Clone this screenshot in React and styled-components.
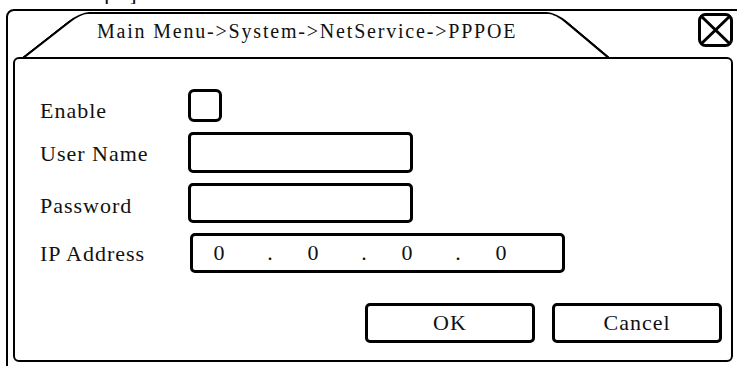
import React from "react"
import styled, { createGlobalStyle } from "styled-components"

const GlobalStyle = createGlobalStyle`
  html, body {
    margin: 0;
    padding: 0;
    background: #fff;
    overflow: hidden;
  }
  #root {
    height: 366px;
    overflow: hidden;
  }
`

const App = () => {
  return (
    <Screen>
      <GlobalStyle />
      <Caption>
        <span>Setup ]</span>
      </Caption>
      <Frame>
        <Header>
          <Tab>Main Menu-&gt;System-&gt;NetService-&gt;PPPOE</Tab>
          <CloseBox aria-label="close">
            <svg width="35" height="34" viewBox="0 0 35 34">
              <rect x="1.5" y="1.5" width="32" height="31" rx="6" fill="none" stroke="#000" strokeWidth="3" />
              <path d="M3 3 L32 31 M32 3 L3 31" stroke="#000" strokeWidth="3" />
            </svg>
          </CloseBox>
        </Header>
        <Panel>
          <Form>
            <Label $drop={6}>Enable</Label>
            <Checkbox />
            <Label>User Name</Label>
            <TextBox $height={41} />
            <Label $drop={3}>Password</Label>
            <TextBox $height={40} />
            <Label>IP Address</Label>
            <IPField>
              <Octet>0</Octet>
              <Dot>.</Dot>
              <Octet>0</Octet>
              <Dot>.</Dot>
              <Octet>0</Octet>
              <Dot>.</Dot>
              <Octet>0</Octet>
            </IPField>
          </Form>
          <Buttons>
            <Button>OK</Button>
            <Button>Cancel</Button>
          </Buttons>
        </Panel>
      </Frame>
    </Screen>
  )
}

const Screen = styled.div`
  width: 737px;
  height: 366px;
  overflow: hidden;
  font-family: "Liberation Serif", "Times New Roman", serif;
  color: #111;
`

const Caption = styled.div`
  height: 4px;
  overflow: hidden;
  padding-left: 43px;
  font-family: "Liberation Sans", Arial, sans-serif;
  font-size: 22px;
  line-height: 22px;
  letter-spacing: 4px;

  span {
    display: block;
    margin-top: -18px;
  }
`

const Frame = styled.div`
  margin: 5px 0 0 6px;
  width: 760px;
  height: 420px;
  box-sizing: border-box;
  border: 2px solid #000;
  border-radius: 8px;
  padding: 0 0 0 5px;
`

const Header = styled.div`
  display: flex;
  align-items: flex-start;
  width: 720px;
  height: 46px;
  box-sizing: border-box;
  padding-top: 1px;
`

const Tab = styled.div`
  position: relative;
  margin-left: 9px;
  width: 588px;
  height: 45px;
  box-sizing: border-box;
  padding: 9px 0 0 75px;
  font-size: 20px;
  line-height: 20px;
  letter-spacing: 1.8px;
  white-space: nowrap;

  &::before,
  &::after {
    content: "";
    position: absolute;
    top: 0;
    bottom: 0;
    width: 60%;
    border-top: 2px solid #000;
  }
  &::before {
    left: 0;
    border-left: 4px solid #000;
    border-top-left-radius: 10px;
    transform-origin: 0 100%;
    transform: skewX(-52deg);
  }
  &::after {
    right: 0;
    border-right: 4px solid #000;
    border-top-right-radius: 10px;
    transform-origin: 100% 100%;
    transform: skewX(50deg);
  }
`

const CloseBox = styled.div`
  margin: 1px 0 0 auto;
  width: 35px;
  height: 34px;

  svg {
    display: block;
  }
`

const Panel = styled.div`
  width: 720px;
  height: 305px;
  box-sizing: border-box;
  border: 2px solid #000;
  border-radius: 6px;
  padding: 29px 9px 0 25px;
`

const Form = styled.div`
  display: grid;
  grid-template-columns: 148px auto;
  row-gap: 10px;
  align-items: center;
  justify-items: start;
`

const Label = styled.div`
  font-size: 22px;
  line-height: 22px;
  letter-spacing: 1px;
  padding-top: ${(p) => (p.$drop ?? 1) * 2}px;
`

const Checkbox = styled.div`
  width: 34px;
  height: 33px;
  box-sizing: border-box;
  border: 3px solid #000;
  border-radius: 6px;
`

const TextBox = styled.div`
  width: 225px;
  height: ${(p) => p.$height}px;
  box-sizing: border-box;
  border: 3px solid #000;
  border-radius: 5px;
`

const IPField = styled.div`
  display: flex;
  align-items: center;
  margin-left: 2px;
  width: 375px;
  height: 40px;
  box-sizing: border-box;
  border: 3px solid #000;
  border-radius: 5px;
  padding-left: 6px;
  font-size: 22px;
`

const Octet = styled.span`
  width: 40px;
  text-align: center;
`

const Dot = styled.span`
  width: 54px;
  box-sizing: border-box;
  padding-left: 8px;
  text-align: center;
`

const Buttons = styled.div`
  display: flex;
  justify-content: flex-end;
  gap: 17px;
  margin-top: 30px;
`

const Button = styled.div`
  display: flex;
  align-items: center;
  justify-content: center;
  width: 170px;
  height: 40px;
  box-sizing: border-box;
  border: 3px solid #000;
  border-radius: 5px;
  font-size: 22px;
  letter-spacing: 1px;
`

export default App
